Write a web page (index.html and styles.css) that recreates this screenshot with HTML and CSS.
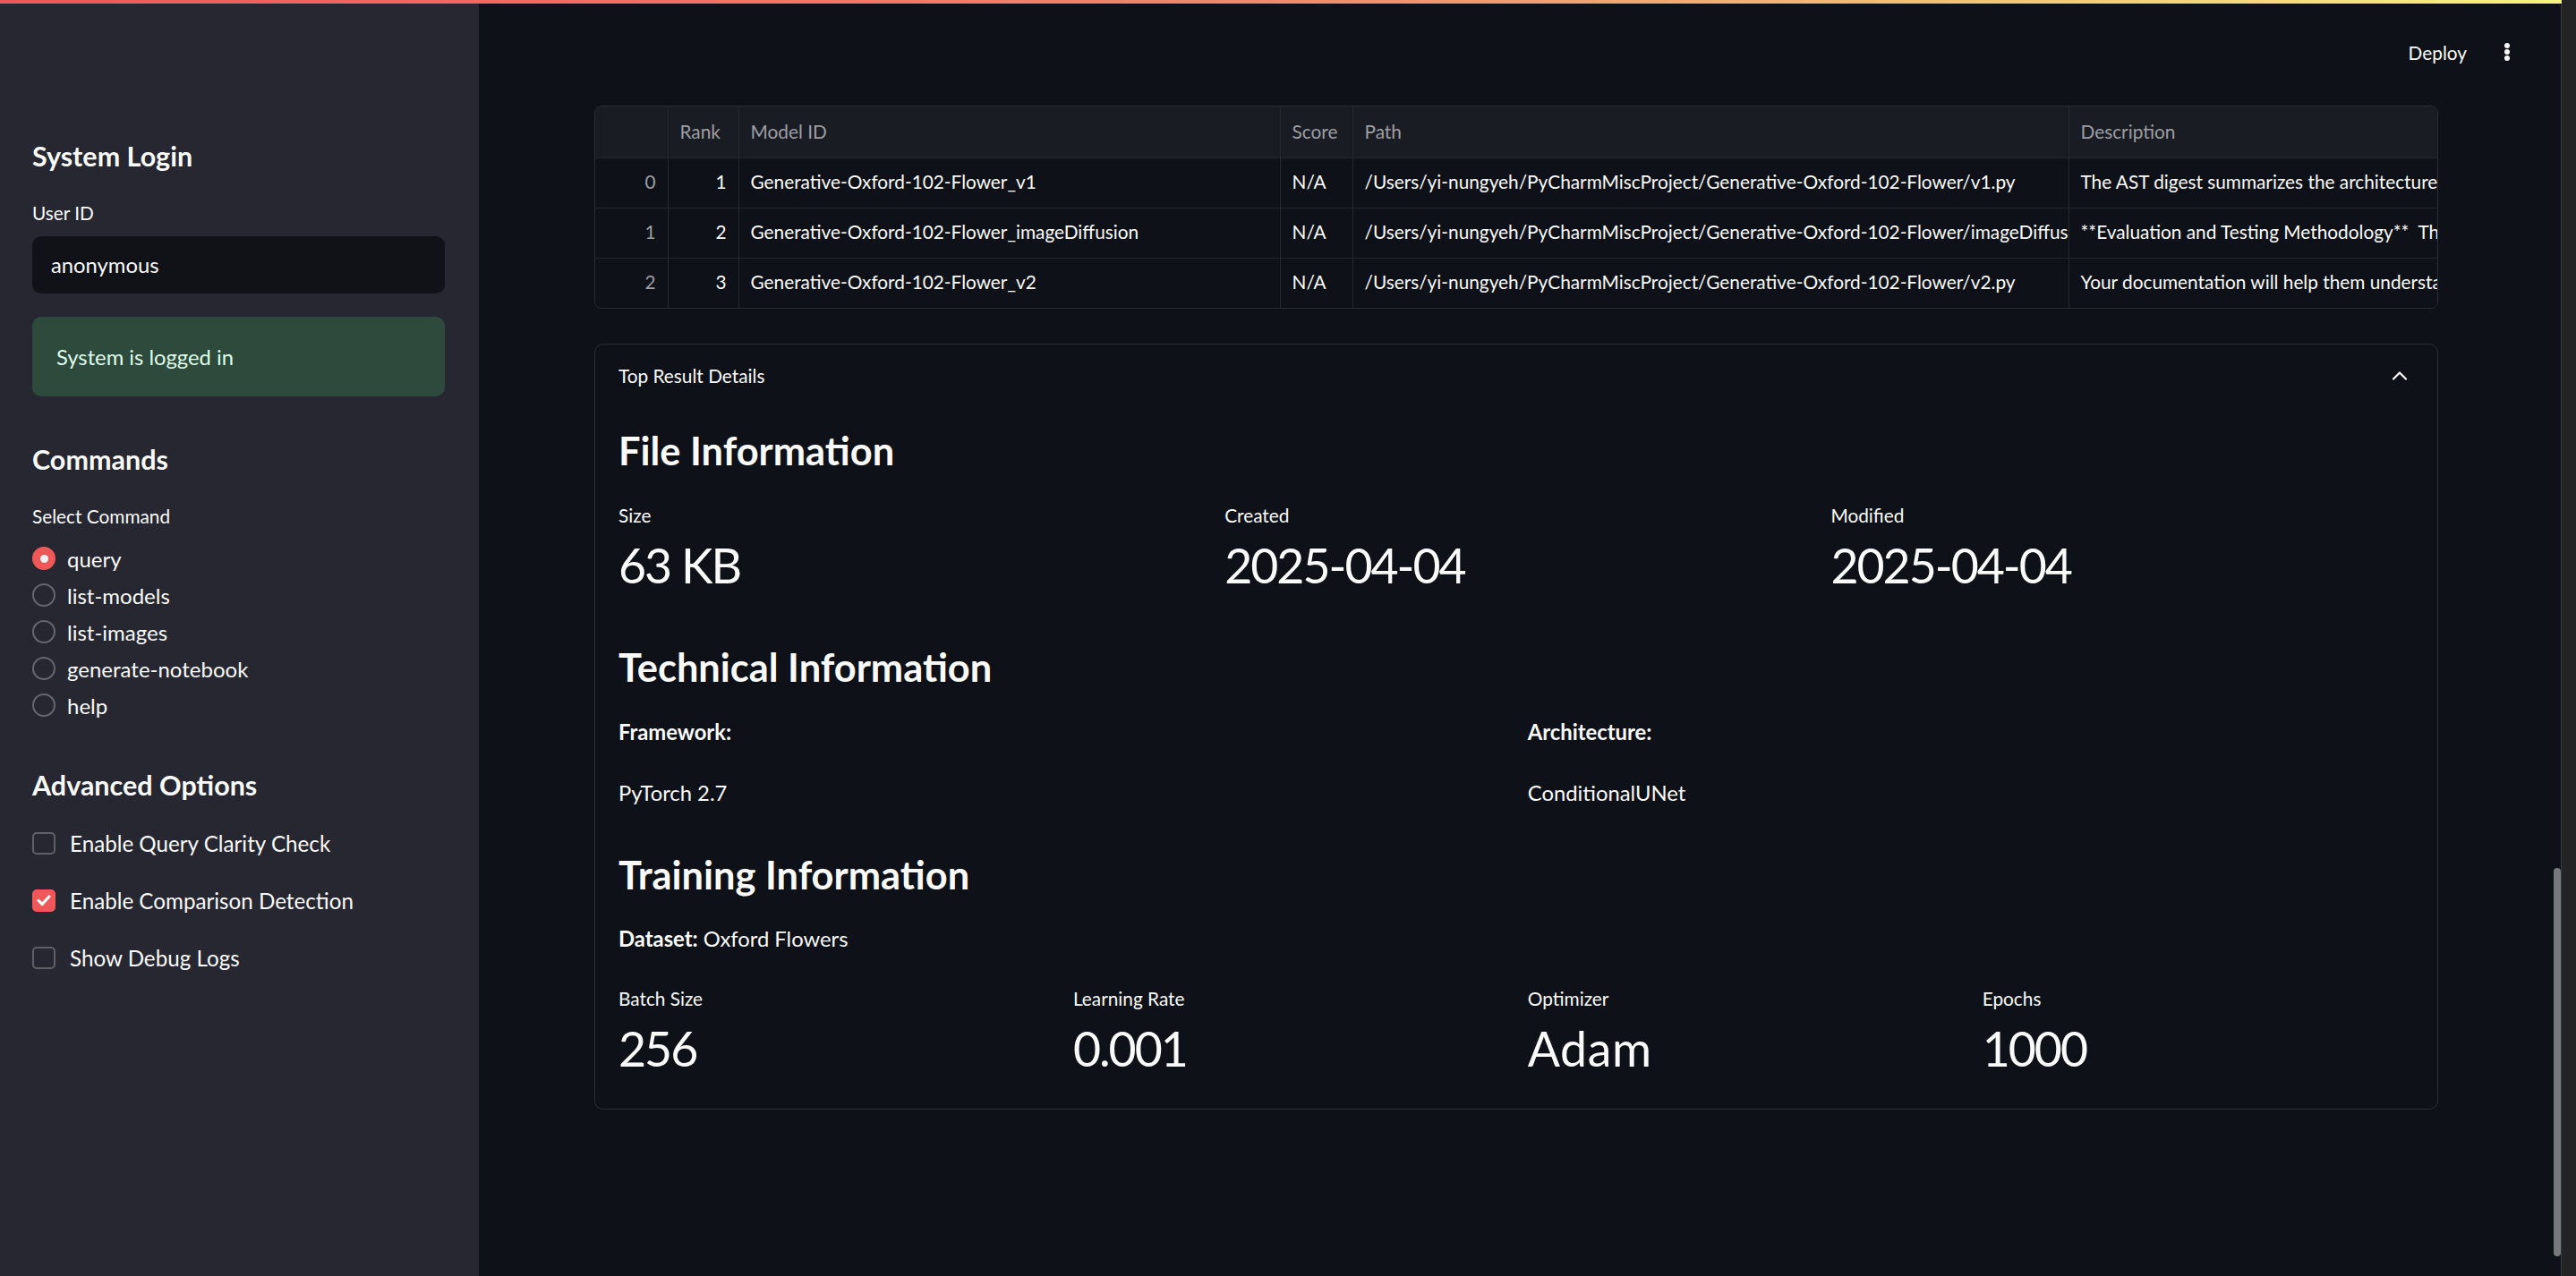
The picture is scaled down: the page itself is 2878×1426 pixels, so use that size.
FILE: index.html
```html
<!DOCTYPE html>
<html lang="en">
<head>
<meta charset="utf-8">
<title>Model Search</title>
<link rel="stylesheet" href="styles.css">
</head>
<body>
<div class="decoration"></div>
<div class="app">
  <aside class="sidebar">
    <h2 class="side-h">System Login</h2>
    <div class="field-label user-label">User ID</div>
    <div class="text-input">anonymous</div>
    <div class="success">System is logged in</div>

    <h2 class="side-h commands">Commands</h2>
    <div class="field-label select-label">Select Command</div>
    <div class="radio-group">
      <div class="radio-row"><span class="radio on"></span><span>query</span></div>
      <div class="radio-row"><span class="radio"></span><span>list-models</span></div>
      <div class="radio-row"><span class="radio"></span><span>list-images</span></div>
      <div class="radio-row"><span class="radio"></span><span>generate-notebook</span></div>
      <div class="radio-row"><span class="radio"></span><span>help</span></div>
    </div>

    <h2 class="side-h advanced">Advanced Options</h2>
    <div class="check-group">
      <div class="check-row"><span class="checkbox"></span><span>Enable Query Clarity Check</span></div>
      <div class="check-row"><span class="checkbox on"><svg viewBox="0 0 24 24" class="tick"><path d="M5.5 12.5l4.5 4.5L18.5 7.5" fill="none" stroke="#fff" stroke-width="3.4" stroke-linecap="round" stroke-linejoin="round"/></svg></span><span>Enable Comparison Detection</span></div>
      <div class="check-row"><span class="checkbox"></span><span>Show Debug Logs</span></div>
    </div>
  </aside>

  <main class="main">
    <header class="topbar">
      <span class="deploy">Deploy</span>
      <svg class="more" viewBox="0 0 8 22"><circle cx="4" cy="4" r="3" fill="#fafafa"/><circle cx="4" cy="11" r="3" fill="#fafafa"/><circle cx="4" cy="18" r="3" fill="#fafafa"/></svg>
    </header>

    <section class="content">
      <div class="table-wrap">
        <table class="df">
          <colgroup>
            <col class="c-idx"><col class="c-rank"><col class="c-model"><col class="c-score"><col class="c-path"><col class="c-desc">
          </colgroup>
          <thead>
            <tr><th></th><th>Rank</th><th>Model ID</th><th>Score</th><th>Path</th><th>Description</th></tr>
          </thead>
          <tbody>
            <tr><td class="idx">0</td><td class="num">1</td><td>Generative-Oxford-102-Flower_v1</td><td>N/A</td><td>/Users/yi-nungyeh/PyCharmMiscProject/Generative-Oxford-102-Flower/v1.py</td><td>The AST digest summarizes the architecture and training setup of the model</td></tr>
            <tr><td class="idx">1</td><td class="num">2</td><td>Generative-Oxford-102-Flower_imageDiffusion</td><td>N/A</td><td>/Users/yi-nungyeh/PyCharmMiscProject/Generative-Oxford-102-Flower/imageDiffusion.py</td><td>**Evaluation and Testing Methodology**&nbsp; The model is evaluated</td></tr>
            <tr><td class="idx">2</td><td class="num">3</td><td>Generative-Oxford-102-Flower_v2</td><td>N/A</td><td>/Users/yi-nungyeh/PyCharmMiscProject/Generative-Oxford-102-Flower/v2.py</td><td>Your documentation will help them understand the model</td></tr>
          </tbody>
        </table>
      </div>

      <div class="expander">
        <div class="exp-summary">
          <span>Top Result Details</span>
          <svg class="chev" viewBox="0 0 18 11"><polyline points="2,9.5 9,2.5 16,9.5" fill="none" stroke="#fafafa" stroke-width="2.2" stroke-linecap="round" stroke-linejoin="round"/></svg>
        </div>
        <div class="exp-body">
          <h3 class="sec-h">File Information</h3>
          <div class="metrics three">
            <div class="metric"><div class="m-label">Size</div><div class="m-value">63 KB</div></div>
            <div class="metric"><div class="m-label">Created</div><div class="m-value">2025-04-04</div></div>
            <div class="metric"><div class="m-label">Modified</div><div class="m-value">2025-04-04</div></div>
          </div>

          <h3 class="sec-h tech">Technical Information</h3>
          <div class="cols two">
            <div><p class="bold-label">Framework:</p><p class="plain">PyTorch 2.7</p></div>
            <div><p class="bold-label">Architecture:</p><p class="plain">ConditionalUNet</p></div>
          </div>

          <h3 class="sec-h train">Training Information</h3>
          <p class="dataset"><strong>Dataset:</strong> Oxford Flowers</p>
          <div class="metrics four">
            <div class="metric"><div class="m-label">Batch Size</div><div class="m-value">256</div></div>
            <div class="metric"><div class="m-label">Learning Rate</div><div class="m-value">0.001</div></div>
            <div class="metric"><div class="m-label">Optimizer</div><div class="m-value word">Adam</div></div>
            <div class="metric"><div class="m-label">Epochs</div><div class="m-value">1000</div></div>
          </div>
        </div>
      </div>
    </section>
    <div class="scroll-thumb"></div>
  </main>
  <div class="desk-edge"></div>
</div>
</body>
</html>
```
FILE: styles.css
```css
* { box-sizing: border-box; margin: 0; padding: 0; }
html, body { height: 100%; }
body {
  background: #0e1117;
  color: #fafafa;
  font-family: "Source Sans Pro", Lato, "Noto Sans", sans-serif;
  overflow: hidden;
}
.decoration {
  position: fixed; top: 0; left: 0; right: 16px; height: 4px; z-index: 10;
  background: linear-gradient(90deg, #ee5858 0%, #f08a6a 50%, #f7f380 100%);
}
.app { display: flex; height: 1426px; }

/* sidebar */
.sidebar {
  width: 535px; flex: none; background: #262730;
  padding: 152px 38px 0 36px;
  display: flex; flex-direction: column;
}
.side-h { font-size: 30.5px; font-weight: 700; line-height: 44px; }
.field-label { font-size: 20.8px; line-height: 30px; }
.user-label { margin-top: 27px; }
.text-input {
  margin-top: 11px; height: 64px; background: #101218; border-radius: 10px;
  padding-left: 21px; font-size: 23.8px; display: flex; align-items: center;
}
.success {
  margin-top: 26px; height: 89px; background: #2e4a3d; border-radius: 10px;
  padding-left: 27px; color: #dffde9; font-size: 23.8px; display: flex; align-items: center;
}
.commands { margin-top: 47.5px; }
.select-label { margin-top: 27px; }
.radio-group { margin-top: 12px; display: flex; flex-direction: column; }
.radio-row { height: 41px; display: flex; align-items: center; gap: 13px; font-size: 24px; }
.radio { width: 26px; height: 26px; border-radius: 50%; border: 2px solid #66676d; flex: none; }
.radio.on { background: #ee5858; border-color: #ee5858; display: flex; align-items: center; justify-content: center; }
.radio.on::after { content: ""; width: 9px; height: 9px; border-radius: 50%; background: #f4f4f6; }
.advanced { margin-top: 46px; }
.check-group { margin-top: 23.5px; display: flex; flex-direction: column; gap: 24px; }
.check-row { height: 40px; display: flex; align-items: center; gap: 16px; font-size: 24.2px; }
.checkbox { width: 26px; height: 25px; border-radius: 5px; border: 2px solid #5f6066; flex: none; display: flex; align-items: center; justify-content: center; }
.checkbox.on { background: #ee5858; border-color: #ee5858; }
.tick { width: 22px; height: 22px; }

/* main */
.main { flex: 1; min-width: 0; position: relative; display: flex; flex-direction: column; border-right: 1px solid #3a3b3f; }
.topbar {
  height: 118px; flex: none; display: flex; align-items: center; justify-content: flex-end;
  padding-right: 56px; padding-bottom: 2px; gap: 41px;
}
.deploy { font-size: 20.8px; }
.more { width: 8px; height: 22px; }
.content { padding: 0 137px 0 129px; }

.table-wrap { border: 1px solid #2a2c33; border-radius: 8px; overflow: hidden; }
.df { width: 100%; border-collapse: collapse; table-layout: fixed; font-size: 20.8px; }
.c-idx { width: 81px; }
.c-rank { width: 79px; }
.c-model { width: 605px; }
.c-score { width: 81px; }
.c-path { width: 800px; }
.df th, .df td {
  padding: 0 13px; white-space: nowrap; overflow: hidden; text-overflow: clip;
  border-right: 1px solid #262830; border-bottom: 1px solid #262830; text-align: left;
}
.df th:last-child, .df td:last-child { border-right: none; }
.df tbody tr:last-child td { border-bottom: none; }
.df th { height: 57px; padding-bottom: 2px; background: #1a1c23; color: #9d9ea3; font-weight: 400; }
.df td { height: 56px; padding-bottom: 3px; background: #0e1117; }
.df td.idx { text-align: right; color: #9d9ea3; }
.df td.num { text-align: right; }

.expander { margin-top: 39px; border: 1px solid #2c2e35; border-radius: 10px; }
.exp-summary {
  height: 71px; display: flex; align-items: center; justify-content: space-between;
  padding: 0 33px 2px 26px; font-size: 20.8px;
}
.chev { width: 18px; height: 11px; }
.exp-body { padding: 16.7px 26px 32px; }
.sec-h { font-size: 43.4px; font-weight: 700; line-height: 60px; }
.metrics { display: grid; gap: 25.6px; }
.metrics.three { grid-template-columns: repeat(3, 1fr); margin-top: 28.2px; }
.metrics.four { grid-template-columns: repeat(4, 1fr); margin-top: 35.6px; }
.m-label { font-size: 20.8px; line-height: 30px; }
.m-value { font-size: 53.6px; line-height: 72px; margin-top: 4.1px; letter-spacing: -2px; }
.m-value.word { letter-spacing: 0.6px; }
.tech { margin-top: 48.2px; }
.cols.two { display: grid; grid-template-columns: 1fr 1fr; gap: 25.6px; margin-top: 26.1px; }
.bold-label { font-weight: 700; font-size: 23.8px; line-height: 34px; }
.plain { font-size: 23.8px; line-height: 34px; margin-top: 33.6px; }
.train { margin-top: 44.3px; }
.dataset { margin-top: 24.6px; font-size: 23.8px; line-height: 34px; }
.dataset strong { font-weight: 700; }

.scroll-thumb {
  position: absolute; right: 0; top: 970px; width: 8px; height: 434px;
  border-radius: 4px; background: #77787b;
}
.desk-edge { width: 16px; flex: none; background: #232325; }
```
